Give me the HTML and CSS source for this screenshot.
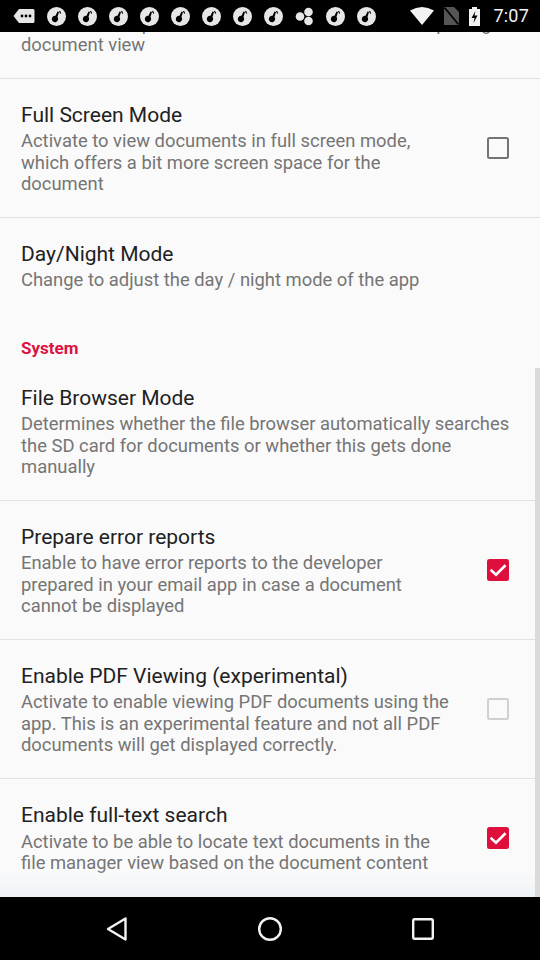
FILE: index.html
```html
<!DOCTYPE html>
<html>
<head>
<meta charset="utf-8">
<link rel="stylesheet" href="styles.css">
</head>
<body>
<div class="screen">
  <div class="statusbar">
    <div class="notifs">
      <svg class="more" width="22" height="16" viewBox="0 0 22 16"><path d="M6 1h14a1.5 1.5 0 0 1 1.5 1.5v11A1.5 1.5 0 0 1 20 15H6L0.5 8z" fill="#e6e6e6"/><circle cx="9" cy="8" r="1.4" fill="#000"/><circle cx="13" cy="8" r="1.4" fill="#000"/><circle cx="17" cy="8" r="1.4" fill="#000"/></svg>
      <svg class="nicon" width="19" height="19" viewBox="0 0 19 19"><circle cx="9.5" cy="9.5" r="9.5" fill="#e6e6e6"/><path d="M10.5 4.5l1.5 0.5-1.5 5a3.2 3.2 0 1 1-2-1.2z" fill="#000"/><path d="M12.5 4l1.2 2.5" stroke="#000" stroke-width="1.2"/></svg>
      <svg class="nicon" width="19" height="19" viewBox="0 0 19 19"><circle cx="9.5" cy="9.5" r="9.5" fill="#e6e6e6"/><path d="M10.5 4.5l1.5 0.5-1.5 5a3.2 3.2 0 1 1-2-1.2z" fill="#000"/><path d="M12.5 4l1.2 2.5" stroke="#000" stroke-width="1.2"/></svg>
      <svg class="nicon" width="19" height="19" viewBox="0 0 19 19"><circle cx="9.5" cy="9.5" r="9.5" fill="#e6e6e6"/><path d="M10.5 4.5l1.5 0.5-1.5 5a3.2 3.2 0 1 1-2-1.2z" fill="#000"/><path d="M12.5 4l1.2 2.5" stroke="#000" stroke-width="1.2"/></svg>
      <svg class="nicon" width="19" height="19" viewBox="0 0 19 19"><circle cx="9.5" cy="9.5" r="9.5" fill="#e6e6e6"/><path d="M10.5 4.5l1.5 0.5-1.5 5a3.2 3.2 0 1 1-2-1.2z" fill="#000"/><path d="M12.5 4l1.2 2.5" stroke="#000" stroke-width="1.2"/></svg>
      <svg class="nicon" width="19" height="19" viewBox="0 0 19 19"><circle cx="9.5" cy="9.5" r="9.5" fill="#e6e6e6"/><path d="M10.5 4.5l1.5 0.5-1.5 5a3.2 3.2 0 1 1-2-1.2z" fill="#000"/><path d="M12.5 4l1.2 2.5" stroke="#000" stroke-width="1.2"/></svg>
      <svg class="nicon" width="19" height="19" viewBox="0 0 19 19"><circle cx="9.5" cy="9.5" r="9.5" fill="#e6e6e6"/><path d="M10.5 4.5l1.5 0.5-1.5 5a3.2 3.2 0 1 1-2-1.2z" fill="#000"/><path d="M12.5 4l1.2 2.5" stroke="#000" stroke-width="1.2"/></svg>
      <svg class="nicon" width="19" height="19" viewBox="0 0 19 19"><circle cx="9.5" cy="9.5" r="9.5" fill="#e6e6e6"/><path d="M10.5 4.5l1.5 0.5-1.5 5a3.2 3.2 0 1 1-2-1.2z" fill="#000"/><path d="M12.5 4l1.2 2.5" stroke="#000" stroke-width="1.2"/></svg>
      <svg class="nicon" width="19" height="19" viewBox="0 0 19 19"><circle cx="9.5" cy="9.5" r="9.5" fill="#e6e6e6"/><path d="M10.5 4.5l1.5 0.5-1.5 5a3.2 3.2 0 1 1-2-1.2z" fill="#000"/><path d="M12.5 4l1.2 2.5" stroke="#000" stroke-width="1.2"/></svg>
      <svg class="nicon" width="19" height="19" viewBox="0 0 19 19"><circle cx="5" cy="9.5" r="4.3" fill="#e6e6e6"/><circle cx="13.5" cy="5" r="4.3" fill="#e6e6e6"/><circle cx="13.5" cy="14" r="4.3" fill="#e6e6e6"/></svg>
      <svg class="nicon" width="19" height="19" viewBox="0 0 19 19"><circle cx="9.5" cy="9.5" r="9.5" fill="#e6e6e6"/><path d="M10.5 4.5l1.5 0.5-1.5 5a3.2 3.2 0 1 1-2-1.2z" fill="#000"/><path d="M12.5 4l1.2 2.5" stroke="#000" stroke-width="1.2"/></svg>
      <svg class="nicon" width="19" height="19" viewBox="0 0 19 19"><circle cx="9.5" cy="9.5" r="9.5" fill="#e6e6e6"/><path d="M10.5 4.5l1.5 0.5-1.5 5a3.2 3.2 0 1 1-2-1.2z" fill="#000"/><path d="M12.5 4l1.2 2.5" stroke="#000" stroke-width="1.2"/></svg>
    </div>
    <div class="sysicons">
      <svg width="24" height="18" viewBox="0 0 24 18"><path d="M0 3.5Q12 -3.5 24 3.5L12 18z" fill="#f2f2f2"/></svg>
      <svg width="15" height="18" viewBox="0 0 15 18"><path d="M0 0h10l5 5v13H0z" fill="#555"/><path d="M0.5 0.5L14.5 17.5" stroke="#000" stroke-width="1.6"/></svg>
      <svg width="11" height="19" viewBox="0 0 11 19"><path d="M3 0h5v2h3v17H0V2h3z" fill="#f2f2f2"/><path d="M6.5 4L2.5 11h3l-1 5 4-7.5h-3z" fill="#000"/></svg>
      <span class="time">7:07</span>
    </div>
  </div>

  <div class="content">
    <div class="list">
      <div class="item first">
        <div class="texts">
          <div class="desc">Activate to keep the screen turned on while in the opening document view</div>
        </div>
      </div>

      <div class="item bordered">
        <div class="texts">
          <div class="title">Full Screen Mode</div>
          <div class="desc">Activate to view documents in full screen mode, which offers a bit more screen space for the document</div>
        </div>
        <div class="cb"></div>
      </div>

      <div class="item">
        <div class="texts">
          <div class="title">Day/Night Mode</div>
          <div class="desc">Change to adjust the day / night mode of the app</div>
        </div>
      </div>

      <div class="category">System</div>

      <div class="item bordered">
        <div class="texts">
          <div class="title">File Browser Mode</div>
          <div class="desc">Determines whether the file browser automatically searches the SD card for documents or whether this gets done manually</div>
        </div>
      </div>

      <div class="item bordered">
        <div class="texts">
          <div class="title">Prepare error reports</div>
          <div class="desc">Enable to have error reports to the developer prepared in your email app in case a document cannot be displayed</div>
        </div>
        <div class="cb checked"><svg width="22" height="22" viewBox="0 0 22 22"><polyline points="4.6,11.6 9,15.6 17.6,7.2" fill="none" stroke="#fff" stroke-width="2.6" stroke-linecap="square"/></svg></div>
      </div>

      <div class="item bordered">
        <div class="texts">
          <div class="title">Enable PDF Viewing (experimental)</div>
          <div class="desc">Activate to enable viewing PDF documents using the app. This is an experimental feature and not all PDF documents will get displayed correctly.</div>
        </div>
        <div class="cb disabled"></div>
      </div>

      <div class="item">
        <div class="texts">
          <div class="title">Enable full-text search</div>
          <div class="desc">Activate to be able to locate text documents in the file manager view based on the document content</div>
        </div>
        <div class="cb checked"><svg width="22" height="22" viewBox="0 0 22 22"><polyline points="4.6,11.6 9,15.6 17.6,7.2" fill="none" stroke="#fff" stroke-width="2.6" stroke-linecap="square"/></svg></div>
      </div>
    </div>
    <div class="scrollbar"></div>
    <div class="fade"></div>
  </div>

  <div class="navbar">
    <svg width="24" height="26" viewBox="0 0 24 26"><path d="M20.5 2.5L3 13l17.5 10.5z" fill="none" stroke="#f2f2f2" stroke-width="2.4" stroke-linejoin="round"/></svg>
    <svg width="26" height="26" viewBox="0 0 26 26"><circle cx="13" cy="13" r="10.8" fill="none" stroke="#f2f2f2" stroke-width="2.4"/></svg>
    <svg width="24" height="24" viewBox="0 0 24 24"><rect x="2.2" y="2.2" width="19.6" height="19.6" rx="1.5" fill="none" stroke="#f2f2f2" stroke-width="2.4"/></svg>
  </div>
</div>
</body>
</html>
```
FILE: styles.css
```css
* { box-sizing: border-box; }
html, body { margin: 0; padding: 0; }
body { background: #000; font-family: Roboto, "Noto Sans", sans-serif; }
.screen { width: 540px; height: 960px; display: flex; flex-direction: column; overflow: hidden; }

.statusbar { height: 32px; background: #000; display: flex; align-items: center; justify-content: space-between; padding: 0 11px 0 13px; flex: none; }
.notifs { display: flex; align-items: center; gap: 12px; }
.nicon { display: block; }
.sysicons { display: flex; align-items: center; gap: 10px; }
.sysicons svg { display: block; }
.time { color: #f2f2f2; font-size: 18px; line-height: 22px; margin-left: 3px; letter-spacing: 0.2px; }

.content { position: relative; height: 865px; background: #fafafa; overflow: hidden; flex: none; }
.list { display: flex; flex-direction: column; }
.item { display: flex; align-items: center; padding: 23px 21px 22.1px 21px; }
.item.first { margin-top: -42.5px; border-bottom: 1px solid #e2e2e2; }
.item.bordered { border-bottom: 1px solid #e2e2e2; }
.texts { flex: 1; min-width: 0; }
.title { font-size: 21px; line-height: 26px; color: #212121; margin-bottom: 2.5px; }
.desc { font-size: 18.4px; line-height: 21.5px; color: #757575; }
.cb { flex: none; width: 22px; height: 22px; margin-left: 32px; margin-right: 10px; border: 2.5px solid #737373; border-radius: 2.5px; }
.cb.disabled { border-color: #d0d0d0; }
.cb.checked { border: none; background: #df0f3d; }
.cb svg { display: block; }
.category { padding: 25px 21px 4px; font-size: 17px; line-height: 20px; font-weight: bold; color: #db1341; }

.scrollbar { position: absolute; right: 0; top: 336px; bottom: 0; width: 5px; background: #dadada; }
.fade { position: absolute; left: 0; right: 5px; bottom: 0; height: 28px; background: linear-gradient(to bottom, rgba(240,244,247,0), rgba(238,242,246,0.9)); pointer-events: none; }

.navbar { flex: 1; background: #000; display: flex; align-items: center; justify-content: space-between; padding: 0 105px 0 105px; }
.navbar svg { display: block; }
```
